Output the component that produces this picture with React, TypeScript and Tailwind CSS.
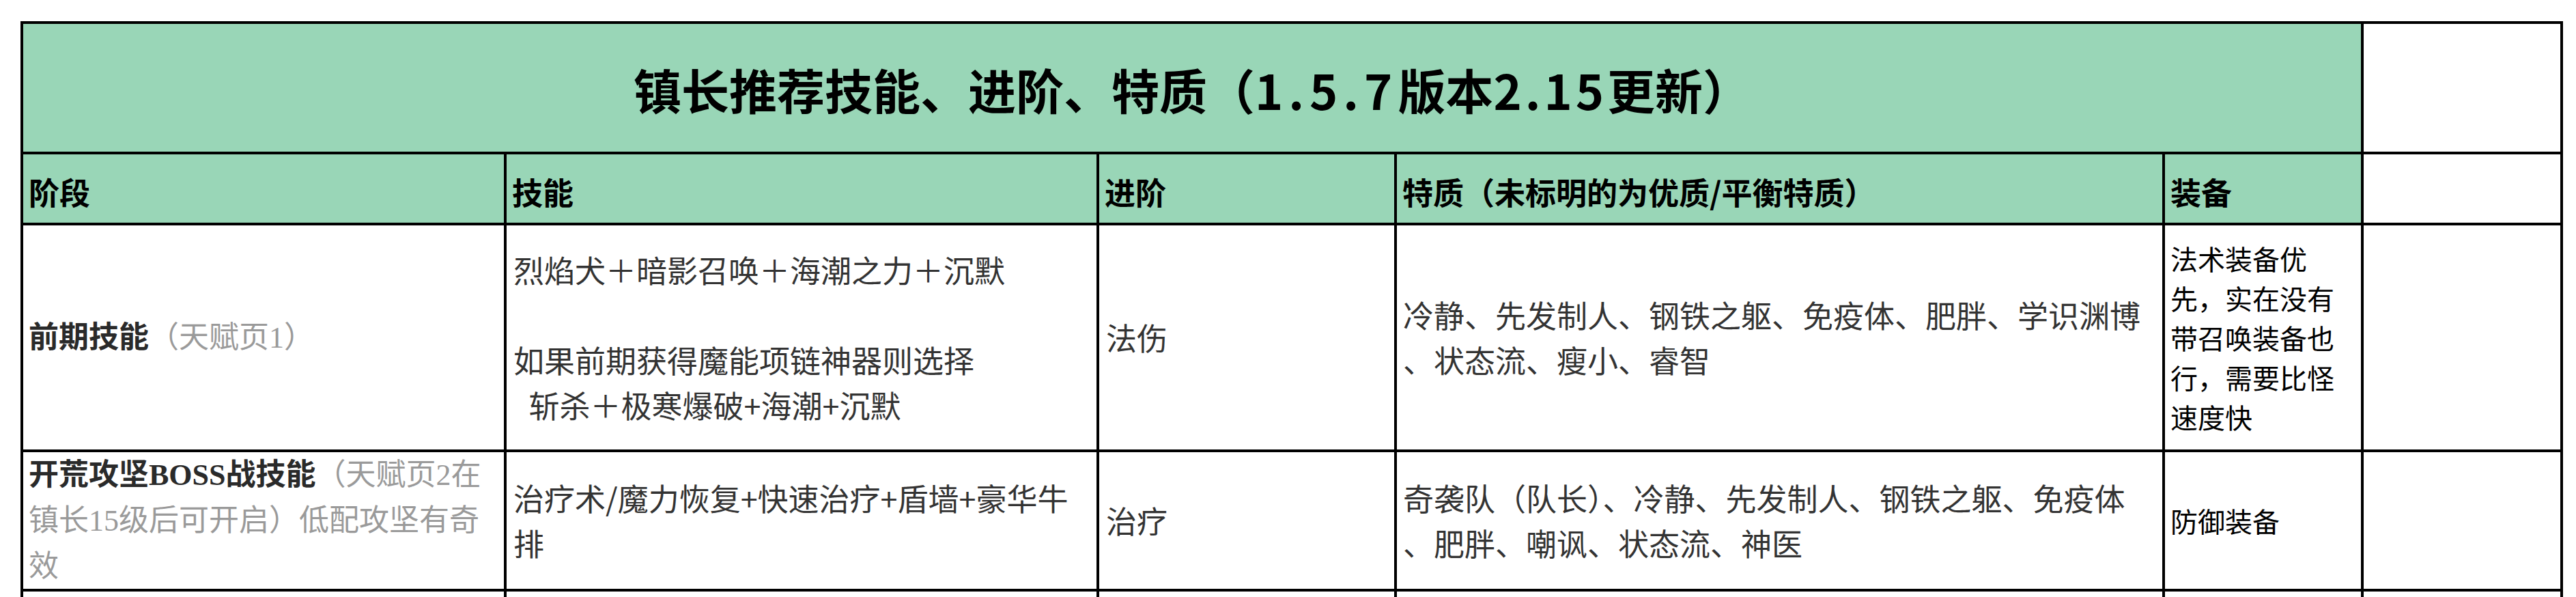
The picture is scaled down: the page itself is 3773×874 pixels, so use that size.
const GREEN = "bg-[#99d6b7]";

type Row = {
  height: string;
  stage: React.ReactNode;
  skills: string[];
  advance: string;
  traits: string[];
  gear: string[];
};

const rows: Row[] = [
  {
    height: "h-[332px]",
    stage: (
      <div className="leading-[67px]">
        <span className="font-bold text-[#2a2a2a]">前期技能</span>
        <span className="text-[#9a9a9a]">（天赋页1）</span>
      </div>
    ),
    skills: [
      "烈焰犬＋暗影召唤＋海潮之力＋沉默",
      "",
      "如果前期获得魔能项链神器则选择",
      "\u2002斩杀＋极寒爆破+海潮+沉默",
    ],
    advance: "法伤",
    traits: ["冷静、先发制人、钢铁之躯、免疫体、肥胖、学识渊博", "、状态流、瘦小、睿智"],
    gear: ["法术装备优", "先，实在没有", "带召唤装备也", "行，需要比怪", "速度快"],
  },
  {
    height: "h-[204px]",
    stage: (
      <div className="leading-[67px]">
        <div>
          <span className="font-bold text-[#2a2a2a]">开荒攻坚BOSS战技能</span>
          <span className="text-[#9a9a9a]">（天赋页2在</span>
        </div>
        <div className="text-[#9a9a9a]">镇长15级后可开启）低配攻坚有奇</div>
        <div className="text-[#9a9a9a]">效</div>
      </div>
    ),
    skills: ["治疗术/魔力恢复+快速治疗+盾墙+豪华牛", "排"],
    advance: "治疗",
    traits: ["奇袭队（队长）、冷静、先发制人、钢铁之躯、免疫体", "、肥胖、嘲讽、状态流、神医"],
    gear: ["防御装备"],
  },
];

function Lines({ lines, className }: { lines: string[]; className: string }) {
  return (
    <div className={className}>
      {lines.map((l, i) => (
        <div key={i} className="whitespace-pre">
          {l === "" ? "\u00a0" : l}
        </div>
      ))}
    </div>
  );
}

const cell = "border-r-4 border-b-4 border-black flex items-center";

export default function App() {
  return (
    <div className="h-[874px] w-[3773px] overflow-hidden bg-white pl-[30px] pt-[31px] font-['Noto_Sans_CJK_SC',sans-serif]">
      <div className="grid w-max grid-cols-[708px_868px_436px_1125px_291px_292px] border-l-4 border-t-4 border-black">
        {/* title */}
        <div className={`${cell} col-span-5 h-[191px] justify-center pt-[4px] ${GREEN}`}>
          <h1 className="whitespace-nowrap text-[70px] font-bold leading-none text-black">
            镇长推荐技能、进阶、特质（<span className="tracking-[8px]">1.5.7</span>版本
            <span className="tracking-[5px]">2.15</span>更新）
          </h1>
        </div>
        <div className={`${cell} h-[191px]`} />

        {/* header */}
        {["阶段", "技能", "进阶", "特质（未标明的为优质/平衡特质）", "装备"].map((h) => (
          <div key={h} className={`${cell} h-[104px] px-[8px] pt-[8px] ${GREEN}`}>
            <span className="whitespace-nowrap text-[45px] font-bold leading-none text-black">{h}</span>
          </div>
        ))}
        <div className={`${cell} h-[104px]`} />

        {rows.map((r, i) => (
          <div key={i} className="contents">
            <div className={`${cell} ${r.height} pl-[8px] whitespace-nowrap font-['Liberation_Serif','Noto_Sans_CJK_SC',serif] text-[44px]`}>
              {r.stage}
            </div>
            <div className={`${cell} ${r.height} pl-[10px]`}>
              <Lines lines={r.skills} className="text-[45px] leading-[66px] text-[#333]" />
            </div>
            <div className={`${cell} ${r.height} pl-[10px]`}>
              <span className="text-[45px] leading-[66px] text-[#333]">{r.advance}</span>
            </div>
            <div className={`${cell} ${r.height} pl-[9px]`}>
              <Lines lines={r.traits} className="text-[45px] leading-[66px] text-[#333]" />
            </div>
            <div className={`${cell} ${r.height} pl-[8px]`}>
              <Lines lines={r.gear} className="text-[40px] leading-[58px] text-black" />
            </div>
            <div className={`${cell} ${r.height}`} />
          </div>
        ))}

        {/* next row, cut off by the window */}
        {[0, 1, 2, 3, 4, 5].map((k) => (
          <div key={k} className={`${cell} h-[200px]`} />
        ))}
      </div>
    </div>
  );
}
